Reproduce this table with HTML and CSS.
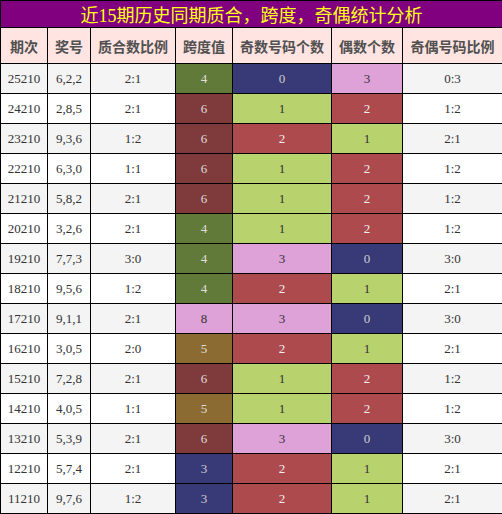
FILE: index.html
```html
<!DOCTYPE html>
<html lang="zh">
<head>
    <meta charset="UTF-8">
    <title>质合跨度奇偶统计</title>
    <link rel="stylesheet" href="styles.css">
</head>
<body>
    <table class="stats">
        <colgroup>
            <col class="w-issue">
            <col class="w-num">
            <col class="w-ratio">
            <col class="w-span">
            <col class="w-odd">
            <col class="w-even">
            <col class="w-oe">
        </colgroup>
        <thead>
            <tr class="title-row"><th colspan="7">近15期历史同期质合，跨度，奇偶统计分析</th></tr>
            <tr class="head-row">
                <th>期次</th><th>奖号</th><th>质合数比例</th><th>跨度值</th><th>奇数号码个数</th><th>偶数个数</th><th>奇偶号码比例</th>
            </tr>
        </thead>
        <tbody>
            <tr><td>25210</td><td>6,2,2</td><td>2:1</td><td class="olive">4</td><td class="navy">0</td><td class="plum">3</td><td>0:3</td></tr>
            <tr><td>24210</td><td>2,8,5</td><td>2:1</td><td class="maroon">6</td><td class="lime">1</td><td class="red">2</td><td>1:2</td></tr>
            <tr><td>23210</td><td>9,3,6</td><td>1:2</td><td class="maroon">6</td><td class="red">2</td><td class="lime">1</td><td>2:1</td></tr>
            <tr><td>22210</td><td>6,3,0</td><td>1:1</td><td class="maroon">6</td><td class="lime">1</td><td class="red">2</td><td>1:2</td></tr>
            <tr><td>21210</td><td>5,8,2</td><td>2:1</td><td class="maroon">6</td><td class="lime">1</td><td class="red">2</td><td>1:2</td></tr>
            <tr><td>20210</td><td>3,2,6</td><td>2:1</td><td class="olive">4</td><td class="lime">1</td><td class="red">2</td><td>1:2</td></tr>
            <tr><td>19210</td><td>7,7,3</td><td>3:0</td><td class="olive">4</td><td class="plum">3</td><td class="navy">0</td><td>3:0</td></tr>
            <tr><td>18210</td><td>9,5,6</td><td>1:2</td><td class="olive">4</td><td class="red">2</td><td class="lime">1</td><td>2:1</td></tr>
            <tr><td>17210</td><td>9,1,1</td><td>2:1</td><td class="plum">8</td><td class="plum">3</td><td class="navy">0</td><td>3:0</td></tr>
            <tr><td>16210</td><td>3,0,5</td><td>2:0</td><td class="brown">5</td><td class="red">2</td><td class="lime">1</td><td>2:1</td></tr>
            <tr><td>15210</td><td>7,2,8</td><td>2:1</td><td class="maroon">6</td><td class="lime">1</td><td class="red">2</td><td>1:2</td></tr>
            <tr><td>14210</td><td>4,0,5</td><td>1:1</td><td class="brown">5</td><td class="lime">1</td><td class="red">2</td><td>1:2</td></tr>
            <tr><td>13210</td><td>5,3,9</td><td>2:1</td><td class="maroon">6</td><td class="plum">3</td><td class="navy">0</td><td>3:0</td></tr>
            <tr><td>12210</td><td>5,7,4</td><td>2:1</td><td class="navy">3</td><td class="red">2</td><td class="lime">1</td><td>2:1</td></tr>
            <tr><td>11210</td><td>9,7,6</td><td>1:2</td><td class="navy">3</td><td class="red">2</td><td class="lime">1</td><td>2:1</td></tr>
        </tbody>
    </table>
</body>
</html>
```

FILE: styles.css
```css
* {
    margin: 0;
    padding: 0;
    box-sizing: border-box;
}

body {
    background: #fff;
    font-family: 'Liberation Serif', 'Noto Sans CJK SC', serif;
}

.stats {
    width: 502px;
    table-layout: fixed;
    border-collapse: collapse;
    border: 1px solid #000;
}

.w-issue { width: 47px; }
.w-num { width: 43px; }
.w-ratio { width: 85px; }
.w-span { width: 57px; }
.w-odd { width: 99px; }
.w-even { width: 71px; }
.w-oe { width: 100px; }

.stats th,
.stats td {
    border: 1px solid #000;
    text-align: center;
    padding: 0;
}

.title-row th {
    height: 27px;
    background-color: #800080;
    color: #FFFF1A;
    font-size: 18px;
    font-weight: normal;
    font-family: 'Liberation Serif', 'Noto Sans CJK SC', serif;
}

.head-row th {
    height: 36px;
    background-color: #FFE4E1;
    color: #505050;
    font-size: 14px;
    font-weight: bold;
    font-family: 'Noto Sans CJK SC', sans-serif;
}

.stats td {
    height: 30px;
    font-size: 13px;
    color: #333;
}

/* striped rows, coloured cells paint over them */
.stats tbody tr:nth-child(odd) {
    background-color: #F4F4F4;
}

.stats tbody tr:nth-child(even) {
    background-color: #fff;
}

.stats td.olive { background-color: #617A3A; color: #ddd; }
.stats td.maroon { background-color: #7F3B3B; color: #ddd; }
.stats td.navy { background-color: #383A78; color: #ccc; }
.stats td.lime { background-color: #B8D26E; }
.stats td.red { background-color: #AD4A4D; color: #f0f0f0; }
.stats td.plum { background-color: #DEA1D8; }
.stats td.brown { background-color: #8B6B32; color: #ddd; }
```
